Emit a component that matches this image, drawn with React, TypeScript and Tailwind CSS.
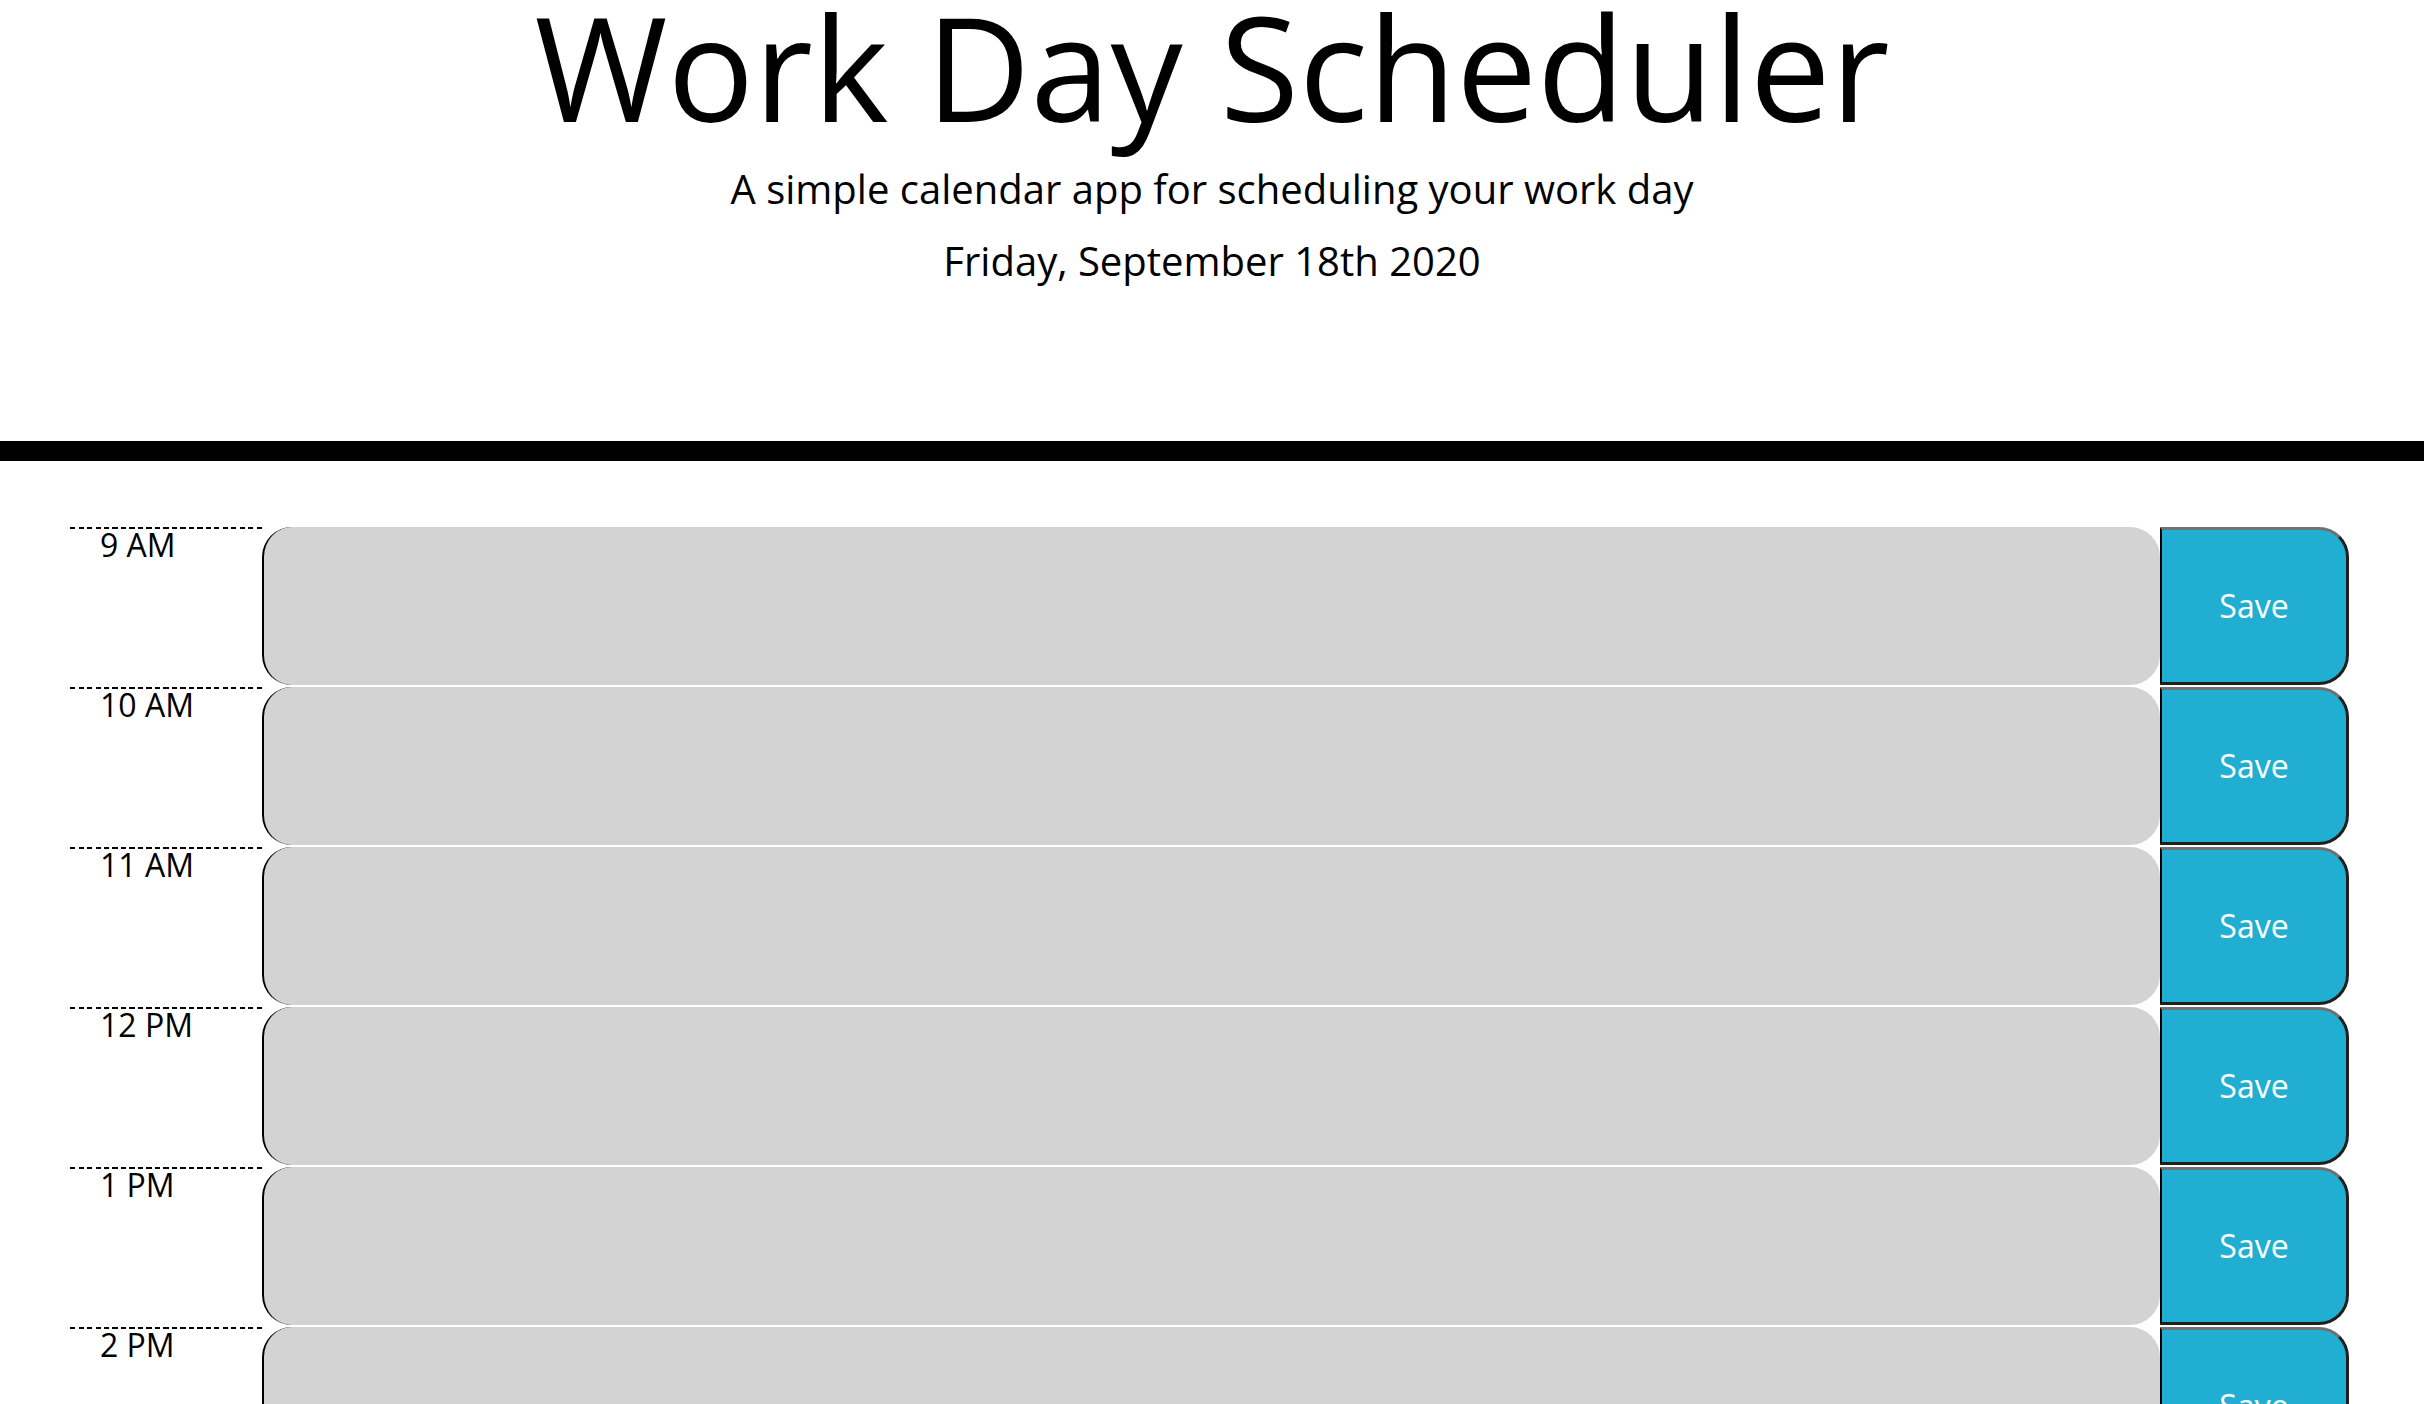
const hours = ['9 AM', '10 AM', '11 AM', '12 PM', '1 PM', '2 PM', '3 PM', '4 PM', '5 PM'];

function TimeBlock({ hour }: { hour: string }) {
    return (
        <div className="flex h-[160px] border-t-2 border-white">
            <div className="w-[192px] shrink-0 bg-white text-black">
                <div className="h-[2px] bg-[repeating-linear-gradient(90deg,#000_0_5px,transparent_5px_8.5px)]" />
                <div className="pl-[30px] text-[32px] leading-none">{hour}</div>
            </div>
            <textarea
                className="w-[1898px] shrink-0 resize-none rounded-[30px] border-l-2 border-black bg-[#d3d3d3] p-5 text-[32px] text-black outline-none"
                defaultValue=""
            />
            <button className="w-[189px] shrink-0 rounded-r-[30px] border-[3px] border-t-[#727272] border-r-[#1f1f1f] border-b-[#1f1f1f] border-l-2 border-l-black bg-[#20afd2] text-[32px] text-white">
                Save
            </button>
        </div>
    );
}

export default function App() {
    return (
        <div className="h-screen overflow-hidden bg-white font-['Open_Sans',sans-serif] leading-none text-black">
            <header className="mb-16 border-b-[20px] border-black pb-32 text-center">
                <h1 className="-mt-5 mb-4 text-[144px] font-normal leading-[1.2]">Work Day Scheduler</h1>
                <p className="mb-8 text-[40px] font-normal">A simple calendar app for scheduling your work day</p>
                <p className="mb-8 text-[40px] font-normal">Friday, September 18th 2020</p>
            </header>

            <div className="pl-[70px]">
                {hours.map((hour) => (
                    <TimeBlock key={hour} hour={hour} />
                ))}
            </div>
        </div>
    );
}
